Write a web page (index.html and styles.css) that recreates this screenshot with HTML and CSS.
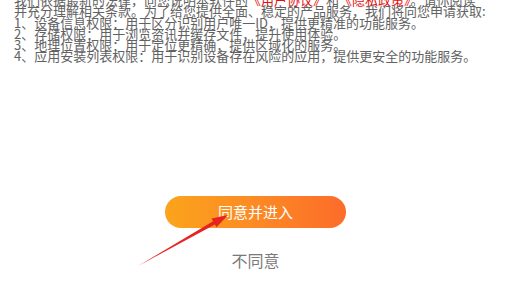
FILE: index.html
```html
<!DOCTYPE html>
<html lang="zh-CN">
<head>
<meta charset="utf-8">
<link rel="stylesheet" href="styles.css">
</head>
<body>
<div class="page">
  <div class="terms">
    <p class="line">我们依据最新的法律，向您说明本软件的<span class="link">《用户协议》</span>和<span class="link">《隐私政策》</span>。请你阅读</p>
    <p class="line">并充分理解相关条款。为了给您提供全面、稳定的产品服务，我们将向您申请获取:</p>
    <p class="line">1、设备信息权限：用于区分识别用户唯一ID，提供更精准的功能服务。</p>
    <p class="line">2、存储权限：用于浏览资讯并缓存文件，提升使用体验。</p>
    <p class="line">3、地理位置权限：用于定位更精确，提供区域化的服务。</p>
    <p class="line">4、应用安装列表权限：用于识别设备存在风险的应用，提供更安全的功能服务。</p>
  </div>
  <div class="actions">
    <button class="agree">同意并进入</button>
    <button class="disagree">不同意</button>
  </div>
  <svg class="arrow" width="513" height="293" viewBox="0 0 513 293">
    <polygon points="138,272 213.1,227.3 211.5,224.5 228,221 216.5,233.3 214.9,230.5" fill="#e8231f"/>
  </svg>
</div>
</body>
</html>
```

FILE: styles.css
```css
html, body {
  margin: 0;
  padding: 0;
  background: #fff;
  overflow: hidden;
}
.page {
  position: relative;
  width: 513px;
  height: 293px;
  font-family: "Noto Sans CJK SC", "Noto Sans", sans-serif;
}
.terms {
  margin-top: -6px;
  padding-left: 14px;
  color: #626262;
  font-size: 13px;
}
.line {
  margin: 0;
  line-height: 11.3px;
  white-space: nowrap;
}
.link {
  color: #e60f0f;
}
.actions {
  display: flex;
  flex-direction: column;
  align-items: center;
  padding-top: 134px;
  padding-right: 2px;
}
.agree {
  width: 181px;
  height: 32px;
  border: none;
  border-radius: 16px;
  background: linear-gradient(90deg, #fba41c 0%, #fc8a24 50%, #fc6c2a 100%);
  color: #fff;
  font-family: inherit;
  font-size: 15px;
  line-height: 32px;
  padding: 0;
}
.disagree {
  margin-top: 21px;
  border: none;
  background: none;
  padding: 0;
  color: #7a7a7a;
  font-family: inherit;
  font-size: 16px;
  line-height: 22px;
}
.arrow {
  position: absolute;
  left: 0;
  top: 0;
  pointer-events: none;
}
```
